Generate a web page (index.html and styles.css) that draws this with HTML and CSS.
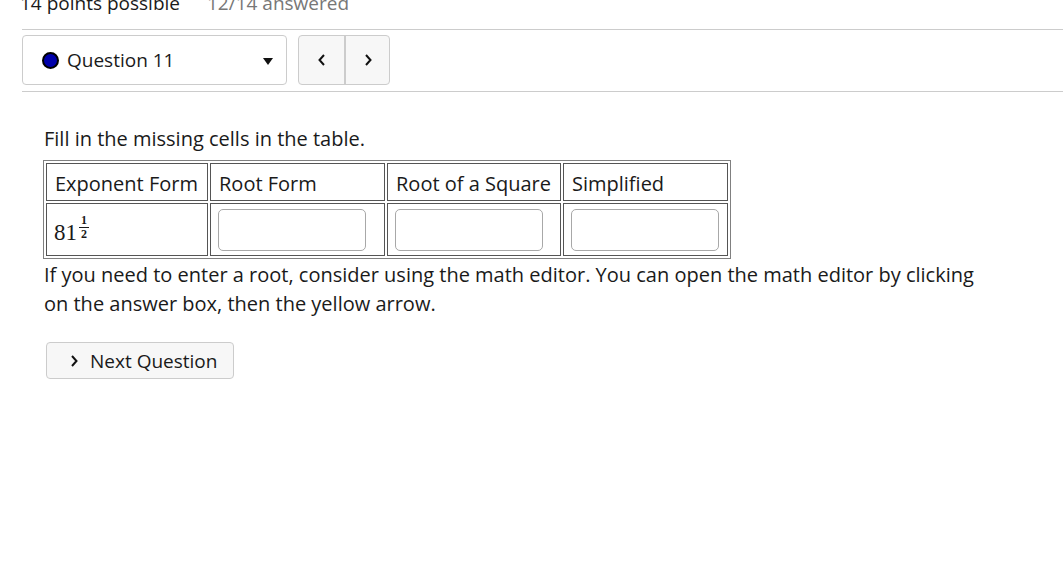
FILE: index.html
```html
<!DOCTYPE html>
<html>
<head>
<meta charset="utf-8">
<link rel="stylesheet" href="styles.css">
</head>
<body>
<div class="page">
  <div class="points">
    <span class="possible">14 points possible</span>
    <span class="answered">12/14 answered</span>
  </div>
  <div class="navbar">
    <div class="qselect">
      <span class="dot"></span>
      <span class="qlabel">Question 11</span>
      <span class="caret"></span>
    </div>
    <div class="pager">
      <button class="pbtn">
        <svg width="10" height="14" viewBox="0 0 10 14"><path d="M7 2 L2.5 7 L7 12" fill="none" stroke="#111" stroke-width="2"/></svg>
      </button>
      <button class="pbtn">
        <svg width="10" height="14" viewBox="0 0 10 14"><path d="M3 2 L7.5 7 L3 12" fill="none" stroke="#111" stroke-width="2"/></svg>
      </button>
    </div>
  </div>
  <div class="content">
    <p class="prompt">Fill in the missing cells in the table.</p>
    <table class="grid">
      <tr>
        <th class="c1">Exponent Form</th>
        <th class="c2">Root Form</th>
        <th class="c3">Root of a Square</th>
        <th class="c4">Simplified</th>
      </tr>
      <tr>
        <td class="c1"><span class="math">81<span class="frac"><span class="num">1</span><span class="den">2</span></span></span></td>
        <td class="c2"><input class="ans" type="text"></td>
        <td class="c3"><input class="ans" type="text"></td>
        <td class="c4"><input class="ans" type="text"></td>
      </tr>
    </table>
    <p class="hint">If you need to enter a root, consider using the math editor. You can open the math editor by clicking on the answer box, then the yellow arrow.</p>
    <button class="next">
      <svg width="10" height="14" viewBox="0 0 10 14"><path d="M3 2 L7.5 7 L3 12" fill="none" stroke="#111" stroke-width="2"/></svg>
      <span>Next Question</span>
    </button>
  </div>
</div>
</body>
</html>
```

FILE: styles.css
```css
html, body {
  margin: 0;
  padding: 0;
  background: #fff;
}
body {
  font-family: "Open Sans", "Liberation Sans", sans-serif;
  font-size: 20px;
  color: #1a1a1a;
}
.page {
  padding-left: 22px;
}
.points {
  margin-top: -9px;
  height: 39px;
  line-height: 24px;
  font-size: 19px;
  border-bottom: 1px solid #ccc;
  box-sizing: border-box;
  display: flex;
  gap: 27px;
}
.possible {
  margin-left: -2px;
  color: #1a1a1a;
}
.answered {
  color: #777;
}
.navbar {
  display: flex;
  align-items: center;
  gap: 11px;
  padding: 5px 0 6px 0;
  border-bottom: 1px solid #ccc;
}
.qselect {
  width: 265px;
  height: 50px;
  box-sizing: border-box;
  border: 1px solid #ccc;
  border-radius: 4px;
  display: flex;
  align-items: center;
  padding-left: 19px;
  padding-right: 13px;
  font-size: 19px;
}
.dot {
  width: 13px;
  height: 13px;
  border-radius: 50%;
  background: #0000aa;
  border: 2px solid #000;
  margin-right: 8px;
}
.qlabel {
  flex: 1;
}
.caret {
  width: 0;
  height: 0;
  border-left: 5px solid transparent;
  border-right: 5px solid transparent;
  border-top: 7px solid #111;
  margin-top: 2px;
}
.pager {
  display: flex;
  height: 50px;
  border: 1px solid #ccc;
  border-radius: 4px;
  background: #f7f7f7;
  box-sizing: border-box;
  overflow: hidden;
}
.pbtn {
  width: 45px;
  height: 100%;
  border: 0;
  background: transparent;
  display: flex;
  align-items: center;
  justify-content: center;
  padding: 0;
}
.pbtn + .pbtn {
  border-left: 2px solid #ccc;
}
.content {
  padding-left: 22px;
  padding-top: 32px;
}
.prompt {
  margin: 0 0 7px 0;
  line-height: 29px;
}
.grid {
  border: 1px solid #808080;
  border-spacing: 2px;
  margin-left: -1px;
  table-layout: fixed;
}
.grid th, .grid td {
  border: 1px solid #555;
  box-sizing: border-box;
  text-align: left;
  font-weight: normal;
  padding: 0 8px;
}
.grid th {
  height: 38px;
  padding-top: 3px;
}
.grid td {
  height: 53px;
  padding: 0 7px;
}
.grid td.c1 {
  padding-top: 5px;
}
.c1 { width: 162px; }
.c2 { width: 175px; }
.c3 { width: 174px; }
.c4 { width: 165px; }
.ans {
  width: 148px;
  height: 42px;
  box-sizing: border-box;
  border: 1px solid #a8a8a8;
  border-radius: 5px;
  display: block;
  margin-top: 1px;
}
.math {
  font-family: "Liberation Serif", "DejaVu Serif", serif;
  font-size: 23px;
  display: inline-flex;
  align-items: flex-start;
}
.frac {
  display: inline-flex;
  flex-direction: column;
  align-items: center;
  font-size: 12px;
  line-height: 11px;
  margin-left: 2px;
  margin-top: -5px;
  font-weight: bold;
}
.num {
  border-bottom: 1px solid #1a1a1a;
  padding: 0 2px 1px;
}
.den {
  padding-top: 1px;
}
.hint {
  margin: 0;
  margin-top: 1px;
  line-height: 29px;
  width: 945px;
}
.next {
  margin-top: 24px;
  margin-left: 2px;
  width: 188px;
  height: 37px;
  box-sizing: border-box;
  border: 1px solid #ccc;
  border-radius: 4px;
  background: #f7f7f7;
  font-family: inherit;
  font-size: 19px;
  color: #1a1a1a;
  display: flex;
  align-items: center;
  padding: 0 0 0 22px;
  gap: 11px;
}
```
